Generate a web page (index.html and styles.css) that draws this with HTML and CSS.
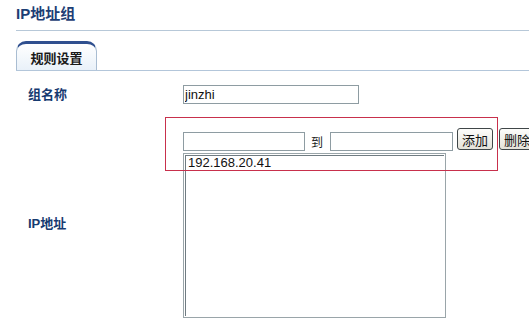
FILE: index.html
```html
<!DOCTYPE html>
<html lang="zh">
<head>
    <meta charset="UTF-8">
    <meta name="viewport" content="width=device-width, initial-scale=1.0">
    <title>IP地址组</title>
    <link rel="stylesheet" href="styles.css">
</head>
<body>
    <div class="page">
        <h1 class="title">IP地址组</h1>

        <div class="tabs">
            <span class="tab">规则设置</span>
        </div>

        <div class="form">
            <div class="row">
                <label class="label" for="groupName">组名称</label>
                <div class="field">
                    <input type="text" id="groupName" class="text name" value="jinzhi">
                </div>
            </div>

            <div class="row row-ip">
                <label class="label">IP地址</label>
                <div class="field">
                    <div class="range">
                        <input type="text" class="text ip">
                        <span class="to">到</span>
                        <input type="text" class="text ip ip-end">
                        <button type="button" class="btn">添加</button>
                        <button type="button" class="btn">删除</button>
                    </div>
                    <div class="list">
                        <div class="item">192.168.20.41</div>
                    </div>
                </div>
            </div>
        </div>

        <!-- red mark around the range inputs -->
        <div class="mark"></div>
    </div>
</body>
</html>
```

FILE: styles.css
```css
html, body {
    margin: 0;
    padding: 0;
    overflow: hidden;
    background-color: #fff;
}

body {
    font-family: 'Liberation Sans', 'Noto Sans CJK SC', sans-serif;
    font-size: 13px;
    color: #222;
}

.page {
    position: relative;
    width: 529px;
    height: 336px;
    padding-left: 16px;
    box-sizing: border-box;
}

.title {
    margin: 0;
    padding: 5px 0 7px;
    line-height: 18px;
    font-size: 15px;
    font-weight: bold;
    color: #1d3e75;
    border-bottom: 1px solid #b7c8d8;
}

.tabs {
    display: flex;
    margin-top: 10px;
    border-bottom: 1px solid #b3c6da;
}

.tab {
    width: 81px;
    height: 29px;
    box-sizing: border-box;
    padding-top: 4px;
    text-align: center;
    font-size: 13px;
    font-weight: bold;
    color: #1a1a1a;
    border-top: 3px solid #2f4f8f;
    border-left: 1px solid #a9bdd2;
    border-right: 1px solid #a9bdd2;
    border-radius: 10px 10px 0 0;
    background: linear-gradient(#ffffff, #e9f1f9);
}

.form {
    padding-left: 12px;
    padding-top: 14px;
}

.row {
    display: grid;
    grid-template-columns: 155px 1fr;
    align-items: center;
}

.row-ip {
    margin-top: 24px;
}

.label {
    font-size: 13px;
    line-height: 19px;
    font-weight: bold;
    color: #163a70;
}

.text {
    height: 19px;
    box-sizing: border-box;
    margin: 0;
    padding: 0 1px;
    border: 1px solid #8e9ca2;
    font-family: 'Liberation Sans', 'Noto Sans CJK SC', sans-serif;
    font-size: 13px;
    color: #111;
    background: #fff;
}

.name {
    width: 176px;
}

.range {
    display: flex;
    align-items: flex-end;
    height: 23px;
    white-space: nowrap;
}

.ip {
    width: 122px;
}

.ip-end {
    width: 123px;
}

.to {
    margin: 0 7px 0 6px;
    line-height: 19px;
    font-family: 'Noto Sans CJK SC', sans-serif;
    font-size: 12px;
    color: #222;
}

.btn {
    flex: none;
    width: 36px;
    height: 22px;
    margin: 0 0 1px 4px;
    padding: 0;
    font-family: 'Noto Sans CJK SC', sans-serif;
    font-size: 13px;
    color: #111;
    border: 1px solid #3f4648;
    border-radius: 3px;
    background: linear-gradient(#fdfdfb, #e4e2d9);
}

.btn + .btn {
    margin-left: 6px;
}

.list {
    width: 263px;
    height: 165px;
    box-sizing: border-box;
    margin-top: 2px;
    padding: 0 3px;
    border: 1px solid #9aa5a9;
    box-shadow: inset 0 0 0 1px #fff, inset 2px 2px 0 #707c82;
}

.item {
    padding-left: 1px;
    padding-top: 1px;
    line-height: 15px;
    font-size: 13px;
    color: #111;
}

.mark {
    position: absolute;
    left: 165px;
    top: 117px;
    width: 333px;
    height: 54px;
    box-sizing: border-box;
    border: 1px solid #c8304c;
    pointer-events: none;
}
```
